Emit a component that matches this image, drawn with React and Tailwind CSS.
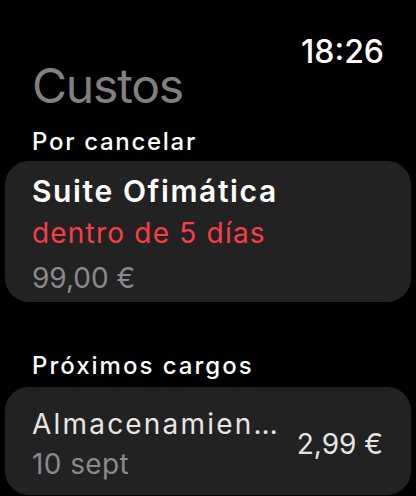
import React from 'react';

const font = { fontFamily: 'Inter, "Noto Sans", sans-serif' };

const App = () => {
  return (
    <div className="w-[416px] h-[496px] bg-black text-white overflow-hidden" style={font}>
      {/* Status bar */}
      <div className="flex justify-end pt-[38px] pr-[32px]">
        <span className="text-[32px] leading-[28px] font-medium">18:26</span>
      </div>

      <h1 className="px-[32px] text-[48px] leading-[40px] tracking-[-1.2px] text-[#808080]">Custos</h1>

      {/* Por cancelar */}
      <div className="mt-[22px] px-[32px] text-[24px] leading-[28px] font-medium tracking-[1.7px]">
        Por cancelar
      </div>
      <div className="mx-[5px] mt-[5px] rounded-[24px] bg-[#222222] px-[27px] pt-[12px] pb-[6px]">
        <div className="text-[30px] leading-[36px] font-semibold tracking-[1.6px]">Suite Ofimática</div>
        <div className="mt-[6px] text-[28px] leading-[36px] tracking-[1.2px] text-[#fa3d46]">dentro de 5 días</div>
        <div className="mt-[9px] text-[28px] leading-[36px] text-[#8a8a8e]">99,00 €</div>
      </div>

      {/* Próximos cargos */}
      <div className="mt-[50px] px-[32px] text-[24px] leading-[28px] font-medium tracking-[2px]">
        Próximos cargos
      </div>
      <div className="mx-[5px] mt-[7px] rounded-[24px] bg-[#222222] pl-[27px] pr-[28px] pt-[19px] pb-[13px] flex items-center justify-between">
        <div>
          <div className="text-[28px] leading-[36px] tracking-[2.2px] text-[#e6e6e6]">Almacenamien…</div>
          <div className="mt-[4px] text-[28px] leading-[36px] tracking-[0.4px] text-[#8a8a8e]">10 sept</div>
        </div>
        <div className="text-[28px] leading-[36px] text-[#e6e6e6]">2,99 €</div>
      </div>
    </div>
  );
};

export default App;
